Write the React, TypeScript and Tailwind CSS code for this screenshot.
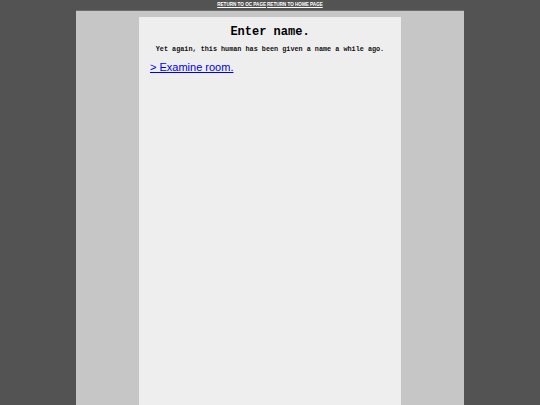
export default function App() {
    return (
        <div className="min-h-screen bg-[#535353] font-['Liberation_Sans',Arial,sans-serif]">
            <nav className="h-[10px] flex items-center justify-center gap-[1px] text-[4.6px] font-bold leading-none text-white">
                <a href="#" className="underline">RETURN TO OC PAGE</a>
                <a href="#" className="underline">RETURN TO HOME PAGE</a>
            </nav>

            <div className="mx-auto w-[388px] min-h-[395px] border-t border-[#6e6e6e] bg-[#c6c6c6] pt-[6px]">
                <main className="mx-auto w-[262px] min-h-[388px] bg-[#eeeeee] px-[11px] pt-[8px]">
                    <h1 className="text-center font-['Liberation_Mono',monospace] text-[12px] font-bold leading-[15px] text-black">
                        Enter name.
                    </h1>
                    <p className="mt-[5px] text-center font-['Liberation_Mono',monospace] text-[6.8px] font-bold leading-[9px] text-[#111]">
                        Yet again, this human has been given a name a while ago.
                    </p>
                    <a href="#" className="mt-[6px] block text-[11px] leading-[14px] text-[#0000ee] underline">
                        &gt; Examine room.
                    </a>
                </main>
            </div>
        </div>
    );
}
